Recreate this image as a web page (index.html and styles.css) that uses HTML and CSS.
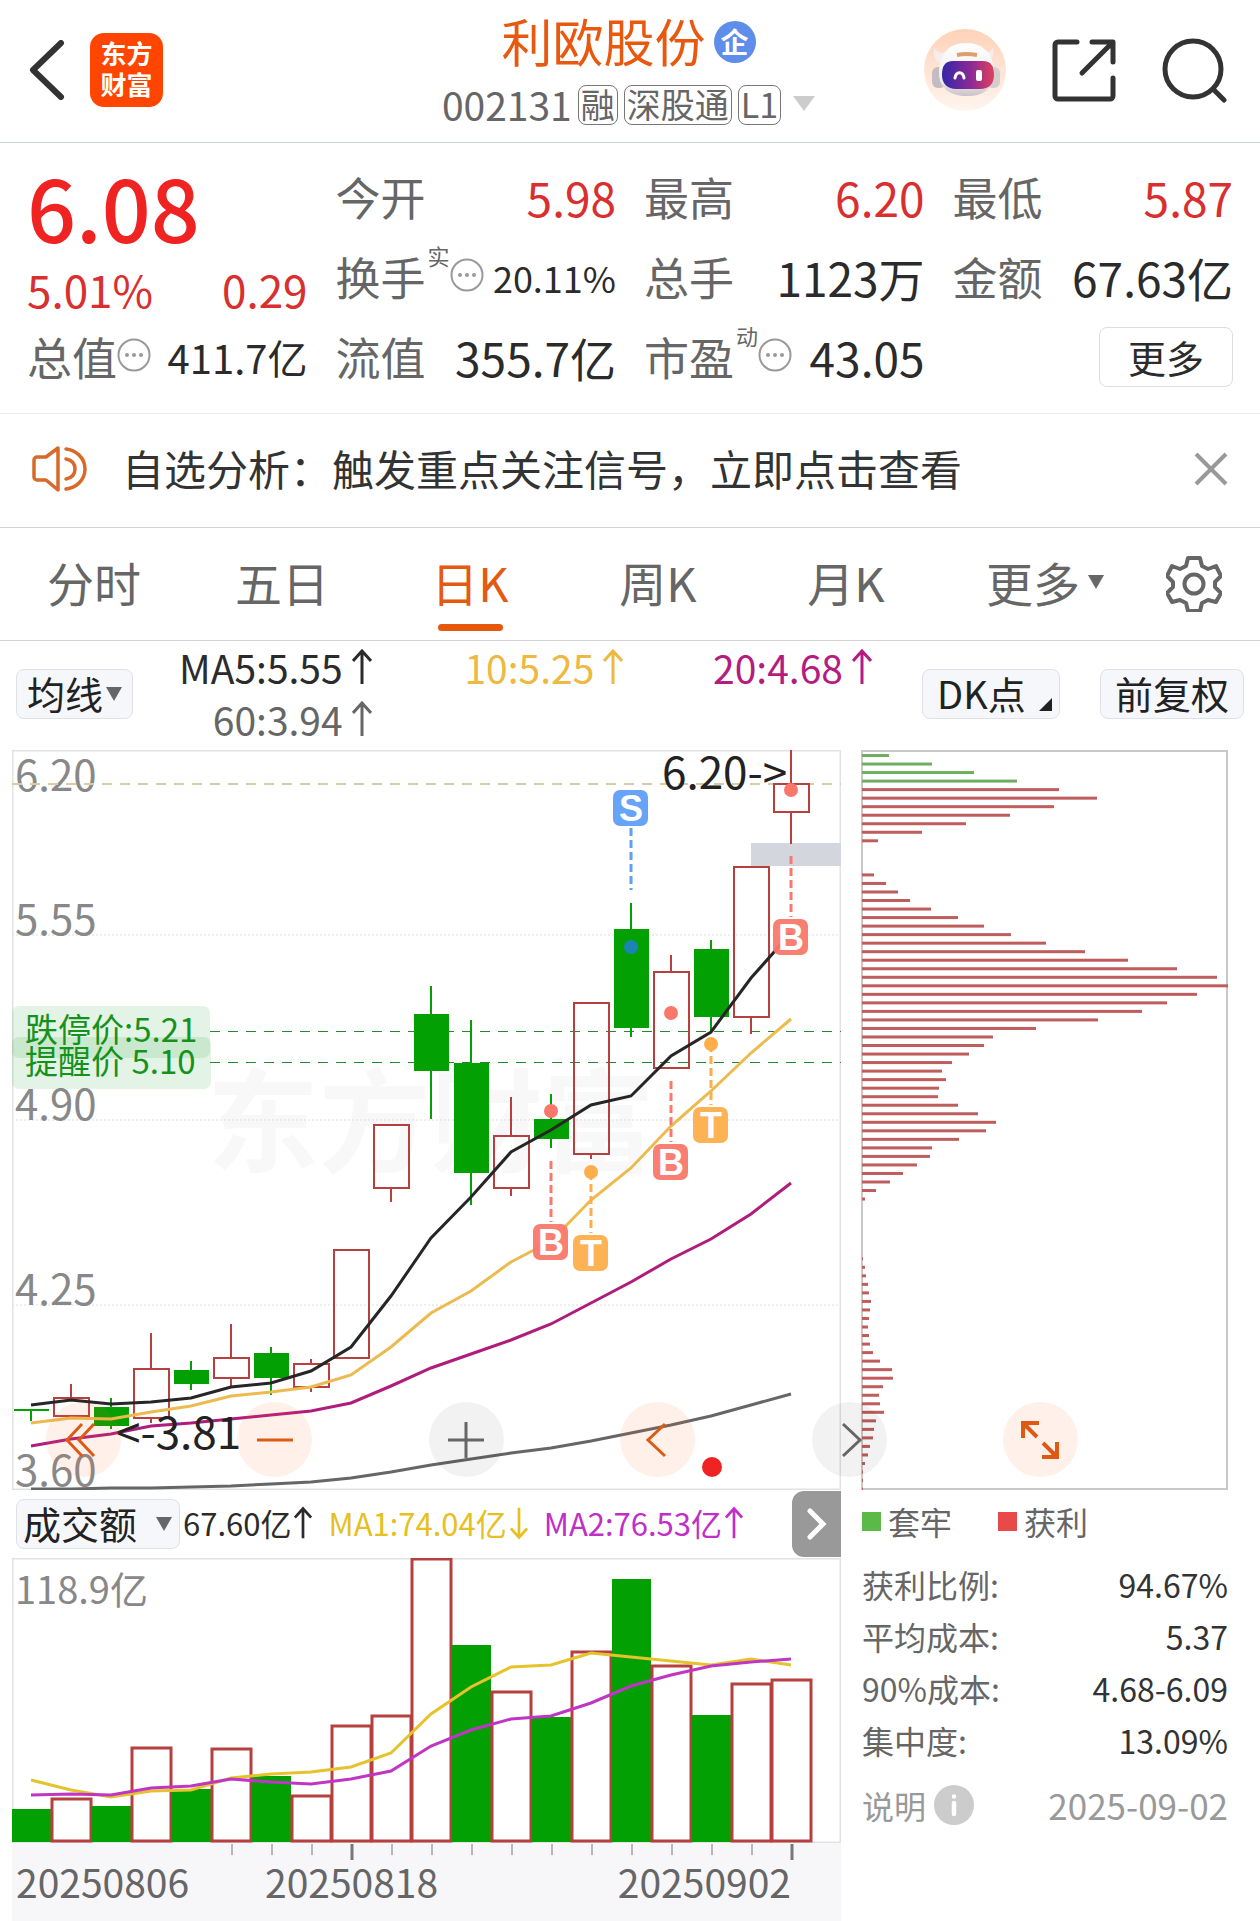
FILE: index.html
```html
<!DOCTYPE html>
<html lang="zh-CN">
<head>
    <meta charset="UTF-8">
    <meta name="viewport" content="width=device-width, initial-scale=1.0">
    <title>利欧股份 002131</title>
    <link rel="stylesheet" href="styles.css">
</head>
<body>
    <svg class="sprite" aria-hidden="true">
        <symbol id="up" viewBox="0 0 20 36"><path d="M10 35V2M1 12l9-10 9 10"/></symbol>
        <symbol id="down" viewBox="0 0 20 36"><path d="M10 1v33M1 24l9 10 9-10"/></symbol>
        <symbol id="dots" viewBox="0 0 34 34">
            <circle cx="17" cy="17" r="15.5"/>
            <path d="M10 17h.01M17 17h.01M24 17h.01" stroke-width="4"/>
        </symbol>
    </svg>

    <header class="header">
        <div class="header-left">
            <button class="icon-btn" aria-label="返回">
                <svg width="36" height="60" viewBox="0 0 36 60" fill="none" stroke="#333" stroke-width="6" stroke-linecap="round" stroke-linejoin="round"><path d="M32 3L4 30l28 27"/></svg>
            </button>
            <div class="logo"><span>东方</span><span>财富</span></div>
        </div>
        <div class="stock">
            <h1 class="stock-name">利欧股份<span class="badge">企</span></h1>
            <div class="stock-code">
                <span>002131</span>
                <span class="tag">融</span>
                <span class="tag">深股通</span>
                <span class="tag">L1</span>
                <i class="caret caret-light"></i>
            </div>
        </div>
        <div class="header-right">
            <button class="icon-btn" aria-label="智能助手">
                <svg width="82" height="82" viewBox="0 0 82 82">
                    <defs>
                        <linearGradient id="halo" x1="0" y1="0" x2="0" y2="1"><stop offset="0" stop-color="#ffd2b8"/><stop offset="1" stop-color="#fff5ef"/></linearGradient>
                        <linearGradient id="shell" x1="0" y1="0" x2="0" y2="1"><stop offset="0" stop-color="#fff"/><stop offset=".7" stop-color="#f0ecee"/><stop offset="1" stop-color="#c9c3c9"/></linearGradient>
                        <linearGradient id="visor" x1="0" y1="0" x2="1" y2="0"><stop offset="0" stop-color="#3325a8"/><stop offset=".55" stop-color="#8a2a96"/><stop offset="1" stop-color="#e0405c"/></linearGradient>
                    </defs>
                    <circle cx="41" cy="41" r="41" fill="url(#halo)"/>
                    <path d="M10 19c-1 7 1 12 6 15l9-12c-6 3-12 2-15-3zM69 19c1 7-1 12-5 15l-9-12c6 3 11 2 14-3z" fill="#f4eeee"/>
                    <rect x="8" y="38" width="14" height="21" rx="6" fill="#c3bcc3"/>
                    <rect x="62" y="38" width="14" height="21" rx="6" fill="#d3cdd2"/>
                    <path d="M42 14c18 0 28 12 28 30 0 15-10 23-27 23S15 59 15 44c0-18 9-30 27-30z" fill="url(#shell)"/>
                    <path d="M33 26c5-1 14-1 20 0" fill="none" stroke="#dda06c" stroke-width="4"/>
                    <path d="M29 32h30c8 0 11 5 11 14s-5 14-14 14H32c-8 0-14-5-14-14s3-14 11-14z" fill="url(#visor)"/>
                    <path d="M31 49c1-7 8-7 9 0" fill="none" stroke="#fff" stroke-width="3" stroke-linecap="round"/>
                    <rect x="52" y="41" width="6" height="11" rx="2" fill="#fff"/>
                </svg>
            </button>
            <button class="icon-btn" aria-label="分享">
                <svg width="64" height="64" viewBox="0 0 64 64" fill="none" stroke="#333" stroke-width="5" stroke-linecap="round" stroke-linejoin="round"><path d="M25 4H6a3 3 0 0 0-3 3v51a3 3 0 0 0 3 3h52a3 3 0 0 0 3-3V40M40 4h21v20M60 5L30 35"/></svg>
            </button>
            <button class="icon-btn" aria-label="搜索">
                <svg width="66" height="66" viewBox="0 0 66 66" fill="none" stroke="#333" stroke-width="5" stroke-linecap="round"><circle cx="31" cy="32" r="28"/><path d="M51 52l11 11"/></svg>
            </button>
        </div>
    </header>

    <section class="quote">
        <div>
            <div class="price">6.08</div>
            <div class="change red"><span>5.01%</span><span>0.29</span></div>
            <div class="item"><span class="label">总值<svg class="dots"><use href="#dots"/></svg></span><span class="value mid">411.7亿</span></div>
        </div>
        <div>
            <div class="item"><span class="label">今开</span><span class="value red">5.98</span></div>
            <div class="item"><span class="label">换手<small>实</small><svg class="dots"><use href="#dots"/></svg></span><span class="value small">20.11%</span></div>
            <div class="item"><span class="label">流值</span><span class="value">355.7亿</span></div>
        </div>
        <div>
            <div class="item"><span class="label">最高</span><span class="value red">6.20</span></div>
            <div class="item"><span class="label">总手</span><span class="value">1123万</span></div>
            <div class="item"><span class="label">市盈<small>动</small><svg class="dots"><use href="#dots"/></svg></span><span class="value">43.05</span></div>
        </div>
        <div>
            <div class="item"><span class="label">最低</span><span class="value red">5.87</span></div>
            <div class="item"><span class="label">金额</span><span class="value">67.63亿</span></div>
            <div class="item item-end"><button class="more">更多</button></div>
        </div>
    </section>

    <section class="notice">
        <svg width="56" height="48" viewBox="0 0 56 48" fill="none" stroke="#d9692b" stroke-width="3.5" stroke-linejoin="round" stroke-linecap="round"><path d="M26 3v42L14 35H5a3 3 0 0 1-3-3V15a3 3 0 0 1 3-3h9zM34 4c9 1 19 8 19 20s-10 19-19 20M34 14c5 1 9 4 9 10s-4 9-9 10"/></svg>
        <a class="notice-text" href="#">自选分析：触发重点关注信号，立即点击查看</a>
        <button class="icon-btn" aria-label="关闭">
            <svg width="34" height="34" viewBox="0 0 34 34" fill="none" stroke="#999" stroke-width="4"><path d="M2 2l30 30M32 2L2 32"/></svg>
        </button>
    </section>

    <nav class="tabs">
        <button class="tab">分时</button>
        <button class="tab">五日</button>
        <button class="tab active">日K</button>
        <button class="tab">周K</button>
        <button class="tab">月K</button>
        <button class="tab tab-more">更多<i class="caret caret-small"></i></button>
        <button class="icon-btn settings" aria-label="设置">
            <svg width="56" height="56" viewBox="0 0 56 56" fill="none" stroke="#666" stroke-width="4" stroke-linejoin="round"><path d="M22 2h12l2 8 6 3 8-3 5 10-6 6v5l6 6-5 9-8-2-6 3-2 8H22l-2-8-6-3-8 2-5-9 6-6v-5l-6-6 5-10 8 3 6-3z"/><circle cx="28" cy="28" r="9.5"/></svg>
        </button>
    </nav>

    <section class="indicators">
        <label class="picker">
            <select aria-label="均线"><option>均线</option></select>
            <i class="caret caret-small"></i>
        </label>
        <div class="ma-list">
            <span>MA5:5.55<svg class="arrow"><use href="#up"/></svg></span>
            <span class="yellow">10:5.25<svg class="arrow"><use href="#up"/></svg></span>
            <span class="purple">20:4.68<svg class="arrow"><use href="#up"/></svg></span>
            <span class="grey">60:3.94<svg class="arrow"><use href="#up"/></svg></span>
        </div>
        <button class="picker dk">DK点<i class="corner"></i></button>
        <button class="picker">前复权</button>
    </section>

    <main class="board">
        <div class="charts">
            <svg id="kline" class="chart" viewBox="0 0 829 740" role="img" aria-label="日K线"></svg>
            <div class="volume-head">
                <label class="picker wide">
                    <select aria-label="指标"><option>成交额</option></select>
                    <i class="caret"></i>
                </label>
                <span>67.60亿<svg class="arrow"><use href="#up"/></svg></span>
                <span class="gold">MA1:74.04亿<svg class="arrow"><use href="#down"/></svg></span>
                <span class="violet">MA2:76.53亿<svg class="arrow"><use href="#up"/></svg></span>
                <button class="next" aria-label="下一个">
                    <svg width="20" height="32" viewBox="0 0 20 32" fill="none" stroke="#fff" stroke-width="5" stroke-linecap="round"><path d="M3 3l13 13L3 29"/></svg>
                </button>
            </div>
            <svg id="volume" class="chart" viewBox="0 0 829 285" role="img" aria-label="成交额"></svg>
            <svg id="axis" class="chart axis" viewBox="0 0 829 78"></svg>
        </div>

        <aside class="chips">
            <svg id="chips" class="chart" viewBox="0 0 367 740" role="img" aria-label="筹码分布"></svg>
            <div class="legend">
                <span><i class="square green-bg"></i>套牢</span>
                <span><i class="square red-bg"></i>获利</span>
            </div>
            <dl class="stats">
                <div><dt>获利比例:</dt><dd>94.67%</dd></div>
                <div><dt>平均成本:</dt><dd>5.37</dd></div>
                <div><dt>90%成本:</dt><dd>4.68-6.09</dd></div>
                <div><dt>集中度:</dt><dd>13.09%</dd></div>
            </dl>
            <div class="explain">
                <span>说明</span>
                <svg width="40" height="40" viewBox="0 0 40 40"><circle cx="20" cy="20" r="20" fill="#ccc"/><path d="M20 11.500h.01M20 18v11" stroke="#fff" stroke-width="4.500" stroke-linecap="round"/></svg>
                <time datetime="2025-09-02">2025-09-02</time>
            </div>
        </aside>

        <div class="tools">
            <button class="tool" aria-label="快速后退"><svg viewBox="0 0 40 40"><path d="M18 4L3 20l15 16M30 4L15 20l15 16"/></svg></button>
            <button class="tool" aria-label="缩小"><svg viewBox="0 0 40 40"><path d="M2 20h36"/></svg></button>
            <button class="tool off" aria-label="放大"><svg viewBox="0 0 40 40"><path d="M2 20h36M20 2v36"/></svg></button>
            <button class="tool" aria-label="后退"><svg viewBox="0 0 40 40"><path d="M27 4L10 20l17 16"/></svg></button>
            <button class="tool off" aria-label="前进"><svg viewBox="0 0 40 40"><path d="M14 4l17 16-17 16"/></svg></button>
            <button class="tool" aria-label="全屏"><svg viewBox="0 0 40 40"><path d="M19 3H3v15M3 3l14 14M22 37h15V22M37 37L23 23" stroke-width="4"/><path d="M3 3h8l-8 8zM37 37h-8l8-8z" fill="currentColor" stroke="none"/></svg></button>
        </div>
    </main>

    <script src="charts.js"></script>
</body>
</html>
```
FILE: styles.css
```css
* { box-sizing: border-box; }
body { margin: 0; background: #fff; color: #2b2b2b; font-family: 'Noto Sans CJK SC', sans-serif; }
button, select { font: inherit; color: inherit; padding: 0; border: none; background: none; cursor: pointer; }
select { appearance: none; }
h1, dl, dd { margin: 0; font-weight: 400; }
.sprite { display: none; }
.icon-btn { display: flex; }
.red { color: #d92f2f; }
.grey { color: #666; }
.yellow { color: #edb944; }
.purple { color: #b51c7f; }
.gold { color: #e6bf22; }
.violet { color: #c02fc6; }

/* small triangles */
.caret { width: 0; height: 0; border: 8px solid transparent; border-top: 14px solid #666; border-bottom: 0; }
.caret-small { border-width: 14px 8px 0; }
.caret-light { border-width: 15px 11px 0; border-top-color: #ccc; margin-left: 6px; }

/* header */
.header { display: grid; grid-template-columns: 1fr auto 1fr; align-items: center; height: 143px; padding: 0 32px 3px 29px; border-bottom: 1px solid #ccd4d3; }
.header-left, .header-right { display: flex; align-items: center; }
.header-left { gap: 25px; }
.header-right { justify-content: flex-end; gap: 46px; }
.logo { display: flex; flex-direction: column; align-items: center; justify-content: center; width: 73px; height: 74px; padding-bottom: 3px; border-radius: 14px; background: #ff4500; color: #fff; font-size: 26px; font-weight: 700; line-height: 31px; }
.stock { display: flex; flex-direction: column; align-items: center; gap: 4px; }
.stock-name { display: flex; align-items: center; gap: 8px; color: #e8590f; font-size: 51px; line-height: 64px; }
.badge { width: 42px; height: 42px; margin-top: 4px; border-radius: 50%; background: #5f8dea; color: #fff; font-size: 28px; font-weight: 700; line-height: 40px; text-align: center; }
.stock-code { display: flex; align-items: center; gap: 6px; color: #666; font-size: 39px; line-height: 56px; }
.tag { height: 40px; margin-top: 2px; padding: 0 2px; border: 1px solid #777; border-radius: 8px; font-size: 34px; line-height: 36px; }

/* quote */
.quote { display: grid; grid-template-columns: repeat(4, 1fr); gap: 28px; padding: 14px 27px 16px; border-bottom: 1px solid #eaeaea; }
.price { height: 104px; color: #f02323; font-size: 86px; font-weight: 500; line-height: 98px; }
.change { display: flex; align-items: center; justify-content: space-between; height: 56px; font-size: 44px; }
.item { display: flex; align-items: center; justify-content: space-between; height: 80px; font-size: 46px; line-height: 80px; white-space: nowrap; }
.item-end { justify-content: flex-end; }
.label { display: flex; align-items: center; color: #666; font-size: 45px; }
.label small { align-self: flex-start; padding-left: 2px; font-size: 22px; line-height: 36px; }
.dots { width: 34px; height: 34px; margin-bottom: 4px; fill: none; stroke: #999; stroke-width: 2; stroke-linecap: round; }
.value.mid { font-size: 40px; }
.value.small { font-size: 36px; }
.more { width: 134px; height: 60px; border: 1px solid #ddd; border-radius: 8px; font-size: 38px; line-height: 52px; }

/* notice */
.notice { display: flex; align-items: center; gap: 34px; height: 114px; padding: 0 32px 3px; border-bottom: 1px solid #d2d2d2; }
.notice-text { flex: 1; color: #333; font-size: 42px; line-height: 60px; padding-bottom: 3px; text-decoration: none; white-space: nowrap; }

/* tabs */
.tabs { display: grid; grid-template-columns: repeat(6, 1fr) 132px; height: 113px; border-bottom: 1px solid #d2d2d2; color: #666; font-size: 47px; }
.tab { position: relative; display: flex; align-items: center; justify-content: center; gap: 8px; padding-bottom: 5px; }
.tab.active { color: #e45a10; }
.tab.active::after { content: ''; position: absolute; bottom: 9px; width: 65px; height: 7px; border-radius: 4px; background: #e6590c; }
.tab-more { justify-content: flex-end; padding-right: 24px; }
.settings { align-items: center; justify-content: center; }

/* moving averages */
.indicators { display: flex; align-items: center; height: 109px; padding: 0 16px 3px; }
.picker { position: relative; display: flex; flex: none; align-items: center; height: 50px; padding: 0 10px; border: 1px solid #dfe1e5; border-radius: 8px; background: #f6f7fa; color: #222; font-size: 38px; line-height: 42px; }
.picker select { height: 48px; padding-bottom: 3px; line-height: 44px; }
.picker .caret-small { margin-left: 2px; }
.picker + .picker { margin-left: 40px; padding: 0 14px 3px; }
.picker.wide { gap: 18px; width: 164px; padding: 0 0 0 6px; }
.picker.dk { width: 138px; margin-left: 50px; padding: 0 14px 3px; }
.corner { position: absolute; right: 7px; bottom: 7px; border-left: 13px solid transparent; border-bottom: 13px solid #222; }
.ma-list { display: grid; grid-template-columns: 239fr 252fr 249fr; flex: 1; font-size: 39px; line-height: 50px; }
.ma-list span { display: flex; align-items: center; justify-content: flex-end; gap: 9px; padding-bottom: 2px; }
.arrow { width: 20px; height: 36px; fill: none; stroke: currentColor; stroke-width: 3; }

/* charts */
.board { position: relative; display: grid; grid-template-columns: 829fr 367fr; gap: 20px; padding: 0 32px 0 12px; }
.chart { display: block; width: 100%; height: auto; }
.chart text { font-family: 'Noto Sans CJK SC', sans-serif; }
.chart .mark { font-family: 'Liberation Sans', sans-serif; font-size: 36px; font-weight: 700; fill: #fff; text-anchor: middle; }
.axis { background: #f7f7fa; }
.volume-head { display: flex; align-items: center; gap: 16px; height: 68px; padding-left: 4px; font-size: 31px; white-space: nowrap; }
.volume-head span { display: flex; align-items: center; gap: 3px; padding-bottom: 3px; }
.volume-head .picker + span { margin-left: -13px; }
.volume-head .arrow { width: 18px; }
.next { display: flex; align-items: center; justify-content: center; width: 49px; height: 66px; margin-left: auto; border-radius: 12px 0 0 12px; background: #999; }

/* chip distribution */
.legend { display: flex; gap: 46px; padding-left: 1px; color: #666; font-size: 32px; line-height: 62px; }
.legend span { display: flex; align-items: center; gap: 7px; }
.square { width: 19px; height: 19px; }
.green-bg { background: #5ab947; }
.red-bg { background: #e84a4a; }
.stats { padding: 6px 0 0 1px; font-size: 32px; line-height: 52px; }
.stats div { display: flex; justify-content: space-between; }
.stats dt { color: #666; }
.stats dd { color: #333; }
.explain { display: flex; align-items: center; gap: 8px; padding: 14px 0 0 1px; color: #999; font-size: 32px; line-height: 50px; }
.explain time { margin-left: auto; font-size: 35px; }

/* floating chart controls */
.tools { position: absolute; top: 652px; left: 46px; right: 182px; display: flex; justify-content: space-between; }
.tool { display: flex; align-items: center; justify-content: center; width: 75px; height: 75px; border-radius: 50%; background: rgba(255, 110, 40, 0.1); color: #dc5a14; }
.tool svg { width: 40px; height: 40px; fill: none; stroke: currentColor; stroke-width: 3; }
.tool.off { background: rgba(0, 0, 0, 0.05); color: #666; }
```
FILE: charts.js
```js
const RED = '#b5403f';
const GREEN = '#02a002';
const STEP = 40;
const cx = i => 19 + i * STEP;

// [colour, high, body top, body bottom, low] in chart units
const candles = [
    ['g', 660, 659, 661, 671], ['r', 634, 648, 666, 666], ['g', 648, 657, 676, 679], ['r', 583, 619, 668, 673],
    ['g', 611, 620, 634, 640], ['r', 574, 608, 628, 637], ['g', 597, 603, 628, 645], ['r', 609, 614, 637, 642],
    ['r', 500, 500, 608, 608], ['r', 375, 375, 438, 452], ['g', 236, 264, 321, 369], ['g', 270, 313, 423, 455],
    ['r', 347, 386, 438, 446], ['g', 344, 369, 389, 398], ['r', 253, 253, 404, 409], ['g', 153, 179, 278, 287],
    ['r', 205, 222, 318, 318], ['g', 190, 199, 267, 283], ['r', 117, 117, 267, 284], ['r', 0, 34, 62, 94]
];
const ma5 = [655, 650, 654, 652, 648, 637, 633, 621, 597, 546, 488, 447, 402, 380, 355, 346, 306, 282, 228, 183];
const ma10 = [673, 668, 669, 662, 656, 646, 642, 637, 625, 597, 563, 541, 512, 491, 450, 418, 376, 341, 303, 269];
const ma20 = [696, 689, 684, 676, 673, 669, 665, 661, 653, 636, 618, 604, 590, 574, 553, 532, 509, 489, 464, 433];
const ma60 = [739, 739, 738, 738, 737, 736, 734, 732, 728, 722, 715, 709, 703, 698, 691, 683, 675, 666, 655, 644];

// [colour, bar top]
const volumes = [
    ['g', 251], ['r', 241], ['g', 248], ['r', 190], ['g', 231], ['r', 191], ['g', 218], ['r', 238], ['r', 168], ['r', 158],
    ['r', 1], ['g', 87], ['r', 134], ['g', 159], ['r', 94], ['g', 21], ['r', 108], ['g', 157], ['r', 126], ['r', 122]
];
const vma1 = [222, 232, 239, 233, 232, 220, 216, 214, 209, 195, 156, 129, 109, 107, 95, 99, 103, 107, 101, 107];
const vma2 = [237, 236, 237, 230, 228, 221, 224, 226, 221, 213, 188, 172, 161, 158, 145, 128, 117, 108, 104, 101];

const chips = [
    27, 70, 112, 155, 197, 235, 192, 148, 104, 60, 16, 0, 0, 0, 12, 24, 36, 48, 69, 96, 122, 149, 184, 223, 266, 315,
    355, 366, 335, 305, 280, 236, 174, 131, 122, 107, 90, 80, 84, 77, 76, 96, 116, 134, 124, 97, 70, 68, 55, 41, 28,
    14, 3, 0, 0, 0, 0, 0, 0, 1, 3, 4, 6, 7, 9, 8, 7, 6, 7, 8, 11, 18, 30, 31, 21, 17, 18, 22, 14, 12, 11, 8, 6, 3, 1, 1, 1
];

// [letter, candle, badge top, line start, line end, dot y]
const marks = [
    ['S', 15, 40, 78, 140, 197], ['B', 19, 169, 106, 167, 40], ['B', 16, 394, 331, 392, 263],
    ['T', 17, 357, 294, 355, 294], ['B', 13, 474, 411, 472, 361], ['T', 14, 485, 422, 483, 422]
];
const markColors = { S: '#5f9ff8', B: '#f9786b', T: '#fdae4b' };

function rect(x, y, w, h, attrs) {
    return `<rect x="${x}" y="${y}" width="${w}" height="${h}" ${attrs}/>`;
}

function line(x1, y1, x2, y2, attrs) {
    return `<line x1="${x1}" y1="${y1}" x2="${x2}" y2="${y2}" ${attrs}/>`;
}

function text(x, y, size, fill, str, attrs = '') {
    return `<text x="${x}" y="${y}" font-size="${size}" fill="${fill}" ${attrs}>${str}</text>`;
}

function curve(values, color) {
    const points = values.map((y, i) => `${cx(i)},${y}`).join(' ');
    return `<polyline points="${points}" fill="none" stroke="${color}" stroke-width="3"/>`;
}

function drawKline() {
    let out = text(195, 414, 112, '#f8f8f8', '东方财富', 'font-weight="700"');
    out += rect(0, 0, 829, 740, 'fill="none" stroke="#e2e2e2" stroke-width="3"');
    [185, 370, 555].forEach(y => out += line(0, y, 829, y, 'stroke="#ddd" stroke-dasharray="2 2"'));
    out += rect(739, 93, 90, 23, 'fill="#d3d6dc"');
    [['6.20', 41], ['5.55', 185], ['4.90', 370], ['4.25', 555], ['3.60', 736]].forEach(([s, y]) => out += text(3, y, 42, '#888', s));
    out += line(0, 34, 829, 34, 'stroke="#dccaa6" stroke-width="2" stroke-dasharray="10 8"');
    out += line(198, 281.5, 829, 281.5, 'stroke="#23892f" stroke-dasharray="10 8"');
    out += line(198, 312.5, 829, 312.5, 'stroke="#23892f" stroke-dasharray="10 8"');

    candles.forEach(([c, high, top, bottom, low], i) => {
        const color = c === 'g' ? GREEN : RED;
        const x = cx(i);
        out += line(x, high, x, top, `stroke="${color}" stroke-width="2"`);
        out += line(x, bottom, x, low, `stroke="${color}" stroke-width="2"`);
        out += c === 'g'
            ? rect(x - 17, top, 35, bottom - top, `fill="${GREEN}"`)
            : rect(x - 17, top, 35, bottom - top, `fill="none" stroke="${RED}" stroke-width="2"`);
    });

    out += curve(ma60, '#666') + curve(ma20, '#b01c7c') + curve(ma10, '#ecbb50') + curve(ma5, '#262626');

    marks.forEach(([letter, i, top, from, to, dot]) => {
        const x = cx(i);
        const color = markColors[letter];
        out += line(x, from, x, to, `stroke="${color}" stroke-width="3" stroke-dasharray="8 4"`);
        out += `<circle cx="${x}" cy="${dot}" r="7" fill="${letter === 'S' ? '#1c84b2' : color}"/>`;
        out += rect(x - 18, top, 35, 36, `rx="7" fill="${color}" fill-opacity="0.95"`);
        out += `<text class="mark" x="${x}" y="${top + 31}">${letter}</text>`;
    });

    out += text(650, 39, 44, '#222', '6.20-&gt;');
    out += text(104, 699, 44, '#222', '&lt;-3.81');
    out += rect(0, 256, 198, 52, 'rx="7" fill="#1c9e2a" fill-opacity="0.12"');
    out += rect(0, 287, 199, 52, 'rx="7" fill="#1c9e2a" fill-opacity="0.12"');
    out += text(13, 292, 33, '#14921c', '跌停价:5.21');
    out += text(13, 324, 33, '#14921c', '提醒价 5.10');
    out += '<circle cx="700" cy="717" r="10" fill="#f02323"/>';
    document.getElementById('kline').innerHTML = out;
}

function drawVolume() {
    let out = rect(0, 0, 829, 285, 'fill="none" stroke="#e2e2e2" stroke-width="3"');
    volumes.forEach(([c, top], i) => {
        const x = i * STEP;
        out += c === 'g'
            ? rect(x, top, 39, 284 - top, `fill="${GREEN}"`)
            : rect(x, top, 39, 283 - top, `fill="#fff" stroke="${RED}" stroke-width="3"`);
    });
    out += curve(vma1, '#e6c32c') + curve(vma2, '#c036c4');
    out += text(3, 46, 38, '#888', '118.9亿');
    document.getElementById('volume').innerHTML = out;
}

function drawAxis() {
    let out = '';
    for (let i = 5; i < 20; i++) {
        const major = i === 8 || i === 19;
        out += line(cx(i) + 1, 1, cx(i) + 1, major ? 17 : 12, `stroke="#777" stroke-width="${major ? 3 : 1}"`);
    }
    out += text(4, 55, 39, '#666', '20250806');
    out += text(253, 55, 39, '#666', '20250818');
    out += text(779, 55, 39, '#666', '20250902', 'text-anchor="end"');
    document.getElementById('axis').innerHTML = out;
}

function drawChips() {
    let out = rect(1, 1, 365, 738, 'fill="none" stroke="#c9c9c9" stroke-width="2"');
    chips.forEach((w, i) => {
        if (w) out += rect(1, 4 + i * 8.53, w, 3, `fill="${i < 4 ? '#6fae60' : '#bf5c5c'}"`);
    });
    document.getElementById('chips').innerHTML = out;
}

drawKline();
drawVolume();
drawAxis();
drawChips();
```
